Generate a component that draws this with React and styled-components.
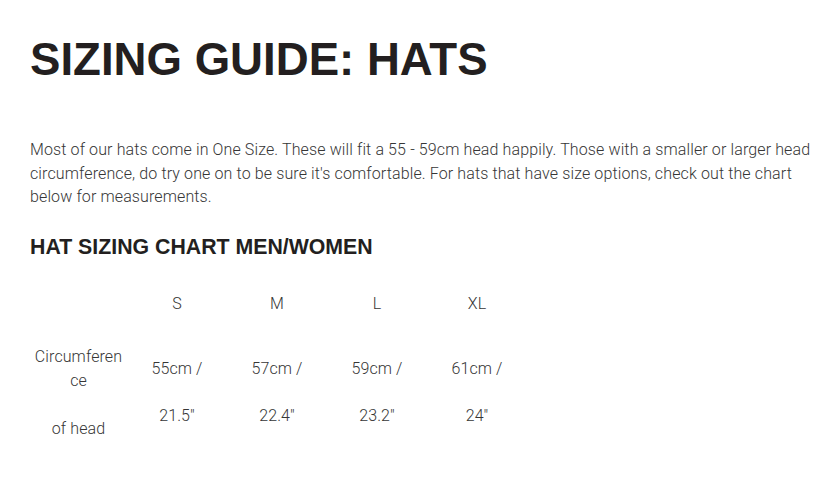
import styled, { createGlobalStyle } from 'styled-components'

const GlobalStyle = createGlobalStyle`
    html, body {
        margin: 0;
        padding: 0;
        background: #fff;
    }
    body {
        font-family: Roboto, "Liberation Sans", Arial, sans-serif;
    }
`

const Page = styled.main`
    padding: 37px 20px 40px 30px;
    box-sizing: border-box;
    width: 839px;
`

const Title = styled.h1`
    margin: 0;
    font-family: "Liberation Sans", Arial, sans-serif;
    font-weight: bold;
    font-size: 45.6px;
    line-height: 45px;
    color: #231f20;
`

const Intro = styled.p`
    margin: 56px 0 0;
    font-size: 16px;
    font-weight: 300;
    letter-spacing: 0.12px;
    line-height: 23.5px;
    color: #363636;
`

const Subtitle = styled.h2`
    margin: 26px 0 0;
    font-family: "Liberation Sans", Arial, sans-serif;
    font-weight: bold;
    font-size: 21.3px;
    line-height: 24px;
    color: #231f20;
`

const Chart = styled.div`
    margin-top: 33px;
    font-size: 16px;
    font-weight: 300;
    letter-spacing: 0.1px;
    line-height: 24px;
    color: #363636;
`

const Row = styled.div`
    display: grid;
    grid-template-columns: 97px repeat(4, 100px);
    align-items: ${(p) => p.$align || 'center'};
    margin-top: ${(p) => p.$gap || 0}px;
`

const Cell = styled.div`
    text-align: center;
    overflow-wrap: anywhere;
    padding: 0 3px;
    padding-top: ${(p) => p.$drop || 0}px;
`

const sizes = ['S', 'M', 'L', 'XL']
const metric = ['55cm /', '57cm /', '59cm /', '61cm /']
const inches = ['21.5"', '22.4"', '23.2"', '24"']

function App() {
    return (
        <Page>
            <GlobalStyle />
            <Title>SIZING GUIDE: HATS</Title>
            <Intro>
                Most of our hats come in One Size. These will fit a 55 - 59cm head happily. Those with a smaller or larger head
                circumference, do try one on to be sure it's comfortable. For hats that have size options, check out the chart
                below for measurements.
            </Intro>
            <Subtitle>HAT SIZING CHART MEN/WOMEN</Subtitle>
            <Chart>
                <Row>
                    <Cell />
                    {sizes.map((s) => (
                        <Cell key={s}>{s}</Cell>
                    ))}
                </Row>
                <Row $gap={29}>
                    <Cell>Circumference</Cell>
                    {metric.map((m) => (
                        <Cell key={m}>{m}</Cell>
                    ))}
                </Row>
                <Row $gap={11} $align="start">
                    <Cell $drop={13}>of head</Cell>
                    {inches.map((v) => (
                        <Cell key={v}>{v}</Cell>
                    ))}
                </Row>
            </Chart>
        </Page>
    )
}

export default App
